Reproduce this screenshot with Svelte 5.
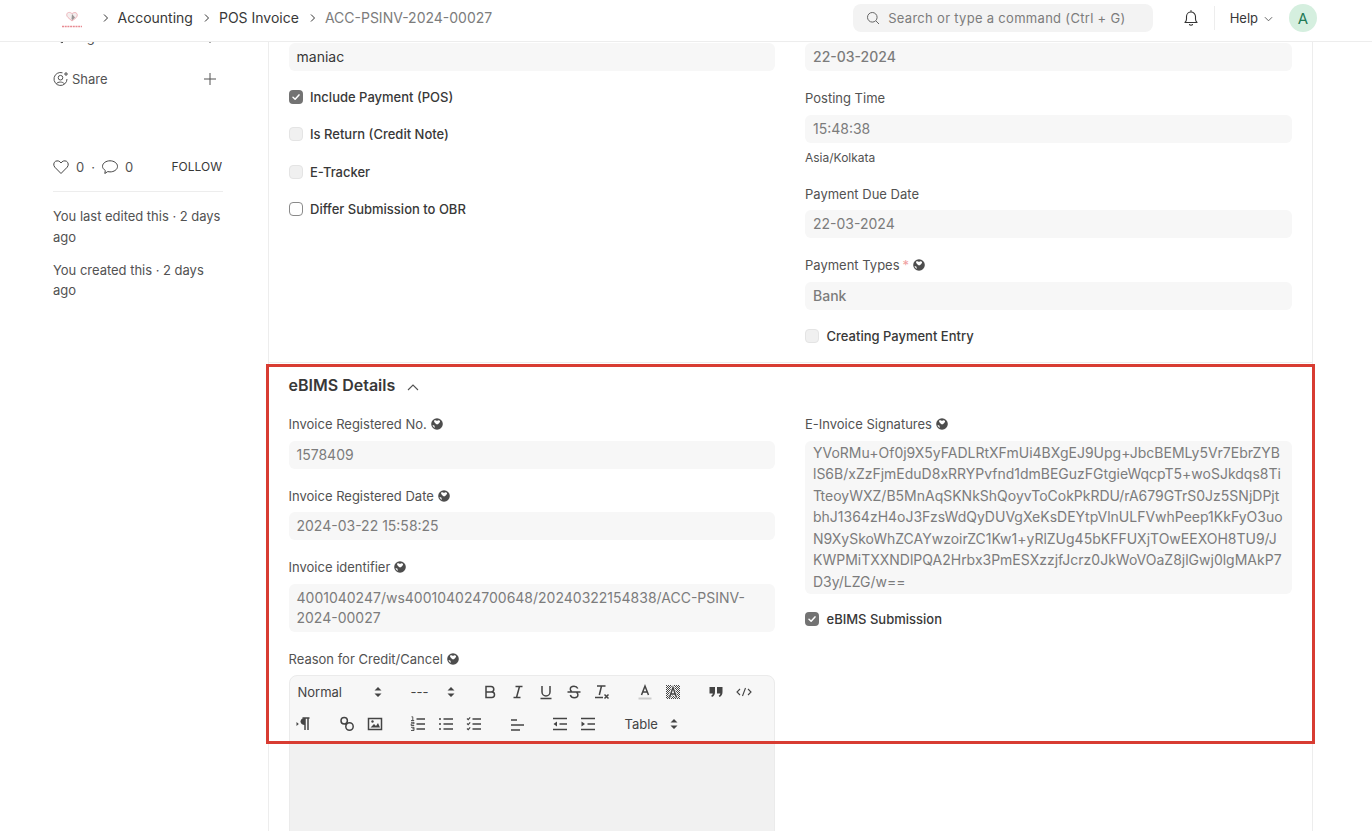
<script lang="ts">
  const signature = [
    "YVoRMu+Of0j9X5yFADLRtXFmUi4BXgEJ9Upg+JbcBEMLy5Vr7EbrZYB",
    "lS6B/xZzFjmEduD8xRRYPvfnd1dmBEGuzFGtgieWqcpT5+woSJkdqs8Ti",
    "TteoyWXZ/B5MnAqSKNkShQoyvToCokPkRDU/rA679GTrS0Jz5SNjDPjt",
    "bhJ1364zH4oJ3FzsWdQyDUVgXeKsDEYtpVlnULFVwhPeep1KkFyO3uo",
    "N9XySkoWhZCAYwzoirZC1Kw1+yRlZUg45bKFFUXjTOwEEXOH8TU9/J",
    "KWPMiTXXNDlPQA2Hrbx3PmESXzzjfJcrz0JkWoVOaZ8jlGwj0lgMAkP7",
    "D3y/LZG/w==",
  ];
</script>

{#snippet globe()}
  <svg class="globe" viewBox="0 0 12 12" width="12" height="12">
    <circle cx="6" cy="6" r="5.800" fill="#4d4d4d" />
    <path d="M3 2.800c1-.8 2.200-.6 3 .1.800-.7 2.100-.9 3.100 0 .2 1.500-1.500 2.700-3.100 3.700C4.400 5.600 2.800 4.300 3 2.800zM1.500 7l1.800.4.700 2.300-1.100-.4C2.200 8.700 1.700 7.900 1.500 7z" fill="#fff" />
  </svg>
{/snippet}

{#snippet stepper()}
  <svg class="stepper" viewBox="0 0 10 14" width="10" height="14">
    <path d="M1.500 5.500 5 2l3.500 3.500zM1.500 8.500 5 12l3.500-3.500z" fill="#444" />
  </svg>
{/snippet}

{#snippet check(state)}
  <span class="check {state}">
    {#if state === "on"}
      <svg viewBox="0 0 14 14" width="14" height="14"><path d="M4 7.300 6.100 9.200 10 4.900" fill="none" stroke="#fff" stroke-width="1.500" stroke-linecap="round" stroke-linejoin="round" /></svg>
    {/if}
  </span>
{/snippet}

{#snippet chevron()}
  <svg class="sep" viewBox="0 0 8 10" width="8" height="10"><path d="M2 1.500 5.500 5 2 8.500" fill="none" stroke="#333" stroke-width="1" /></svg>
{/snippet}

<div class="page">
  <header class="navbar">
    <div class="crumbs">
      <svg class="logo" viewBox="0 0 24 20" width="24" height="20">
        <path d="M12 13 8 9.500C6 7.500 6.500 5 8.500 4.500c1.500-.3 2.700.3 3.500 1.300 1-1 2.500-1.600 4-1 1.600.8 1.700 3 .3 4.700z" fill="#f3eeee" stroke="#eeb4ba" stroke-width="1" />
        <path d="M12 6l3 3.500-2.500 2.500-1-.8z" fill="#9a9696" />
        <path d="M2 18.500h20" stroke="#e88a92" stroke-width="1.400" stroke-dasharray="2 .7" />
      </svg>
      {@render chevron()}
      <span class="crumb">Accounting</span>
      {@render chevron()}
      <span class="crumb">POS Invoice</span>
      {@render chevron()}
      <span class="crumb current">ACC-PSINV-2024-00027</span>
    </div>
    <div class="nav-right">
      <div class="search">
        <svg viewBox="0 0 14 14" width="14" height="14"><circle cx="6.300" cy="6.300" r="4.800" fill="none" stroke="#666" stroke-width="1" /><path d="m10 10 3 3" stroke="#666" stroke-width="1" /></svg>
        <span>Search or type a command (Ctrl + G)</span>
      </div>
      <svg class="bell" viewBox="0 0 16 18" width="16" height="18"><path d="M2 13.500c1-1 1.500-2 1.500-3.500V7.500a4.500 4.500 0 0 1 9 0V10c0 1.500.5 2.500 1.500 3.500zM6.500 15.500c.4 1 2.600 1 3 0M8 3V1.500" fill="none" stroke="#333" stroke-width="1.100" stroke-linejoin="round" stroke-linecap="round" /></svg>
      <span class="divider"></span>
      <span class="help">Help</span>
      <svg class="help-caret" viewBox="0 0 10 6" width="10" height="6"><path d="m1 1 4 4 4-4" fill="none" stroke="#555" stroke-width="1" /></svg>
      <span class="avatar">A</span>
    </div>
  </header>

  <div class="body">
    <aside class="sidebar">
      <div class="side-row cut">
        <svg viewBox="0 0 16 16" width="16" height="16"><path d="M2 2h6l6.500 6.500-5.500 5.500L2 8z" fill="none" stroke="#525252" stroke-width="1" /></svg>
        <span>Tags</span>
        <svg class="plus" viewBox="0 0 14 14" width="14" height="14"><path d="M7 1v12M1 7h12" stroke="#525252" stroke-width="1" /></svg>
      </div>
      <div class="side-row share">
        <svg viewBox="0 0 16 16" width="16" height="16"><path d="M9.500 1.800A6.500 6.500 0 1 0 14 8" fill="none" stroke="#525252" stroke-width="1" /><circle cx="7.500" cy="6.700" r="2.300" fill="none" stroke="#525252" stroke-width="1" /><path d="M3.400 12.800c1.200-2.300 6.500-2.300 8 0" fill="none" stroke="#525252" stroke-width="1" /><path d="M11 3h4M13 1v4" stroke="#525252" stroke-width="1" /></svg>
        <span>Share</span>
        <svg class="plus" viewBox="0 0 14 14" width="14" height="14"><path d="M7 1v12M1 7h12" stroke="#525252" stroke-width="1" /></svg>
      </div>
      <div class="likes">
        <svg viewBox="0 0 16 14" width="16" height="14"><path d="M8 13.500 1.800 7.200C.1 5.200.6 2.400 2.500 1.300 4.500.3 6.800 1 8 3 9.200 1 11.500.3 13.500 1.300 15.400 2.400 15.900 5.200 14.200 7.200z" fill="none" stroke="#444" stroke-width="1" stroke-linejoin="round" /></svg>
        <span class="count">0</span>
        <span class="dot">·</span>
        <svg viewBox="0 0 16 14" width="16" height="14"><path d="M8 .8c3.900 0 7.500 2.300 7.500 5.600s-3.600 5.500-7.500 5.500c-.8 0-1.600-.1-2.300-.3L2.800 13.500l.5-3C1.700 9.400.5 8 .5 6.400.5 3.100 4.100.8 8 .8z" fill="none" stroke="#444" stroke-width="1" stroke-linejoin="round" /></svg>
        <span class="count">0</span>
        <span class="follow">FOLLOW</span>
      </div>
      <p class="meta first">You last edited this · 2 days ago</p>
      <p class="meta">You created this · 2 days ago</p>
    </aside>

    <main class="card">
      <section class="columns top">
        <div>
          <div class="input dark">maniac</div>
          <div class="check-row first">{@render check("on")}<span>Include Payment (POS)</span></div>
          <div class="check-row">{@render check("off")}<span>Is Return (Credit Note)</span></div>
          <div class="check-row">{@render check("off")}<span>E-Tracker</span></div>
          <div class="check-row">{@render check("empty")}<span>Differ Submission to OBR</span></div>
        </div>
        <div>
          <div class="input strong">22-03-2024</div>
          <div class="label after">Posting Time</div>
          <div class="input">15:48:38</div>
          <div class="hint">Asia/Kolkata</div>
          <div class="label after tz">Payment Due Date</div>
          <div class="input">22-03-2024</div>
          <div class="label after">Payment Types <span class="req">*</span> {@render globe()}</div>
          <div class="input strong">Bank</div>
          <div class="check-row last">{@render check("off")}<span>Creating Payment Entry</span></div>
        </div>
      </section>

      <section class="ebims">
        <h2>eBIMS Details
          <svg viewBox="0 0 12 8" width="12" height="8"><path d="m1 7 5-5 5 5" fill="none" stroke="#525252" stroke-width="1.100" /></svg>
        </h2>
        <div class="columns">
          <div>
            <div class="label">Invoice Registered No. {@render globe()}</div>
            <div class="input">1578409</div>
            <div class="label after">Invoice Registered Date {@render globe()}</div>
            <div class="input">2024-03-22 15:58:25</div>
            <div class="label after">Invoice identifier {@render globe()}</div>
            <div class="input">4001040247/ws400104024700648/20240322154838/ACC-PSINV-2024-00027</div>
            <div class="label after">Reason for Credit/Cancel {@render globe()}</div>
            <div class="editor">
              <div class="toolbar">
                <div class="tb-row">
                  <span class="picker header">Normal{@render stepper()}</span>
                  <span class="picker size">---{@render stepper()}</span>
                  <span class="group">
                    <span class="btn"><svg viewBox="0 0 18 18"><path d="M5 3.500h5a2.800 2.800 0 0 1 0 5.600H5zM5 9.100h5.800a2.700 2.700 0 0 1 0 5.400H5z" class="ln" /></svg></span>
                    <span class="btn"><svg viewBox="0 0 18 18"><path d="M6.500 3.500h7M4.500 14.500h7M10.500 3.500l-3 11" class="ln" /></svg></span>
                    <span class="btn"><svg viewBox="0 0 18 18"><path d="M5 3v6a4 4 0 0 0 8 0V3M3.500 15.500h11" class="ln" /></svg></span>
                    <span class="btn"><svg viewBox="0 0 18 18"><path d="M12.800 5.500C12 3.800 10.500 3.300 9 3.300c-2 0-3.700 1-3.700 2.900 0 1.100.6 1.900 1.600 2.300M5.300 12c.7 1.900 2.200 2.700 3.900 2.700 2 0 3.700-1 3.700-3 0-1.100-.5-1.900-1.400-2.400M2.500 9h13" class="ln" /></svg></span>
                    <span class="btn"><svg viewBox="0 0 18 18"><path d="M4 3h8.500M8.500 3l-2.200 9M2 14.500h8" class="ln" /><path d="M11.500 11.500l4 4M15.500 11.500l-4 4" class="ln" /></svg></span>
                  </span>
                  <span class="group">
                    <span class="btn"><svg viewBox="0 0 18 18"><path d="M5.500 12 9 3l3.500 9M6.800 9h4.400" class="ln" /><path d="M2.500 15.500h13" stroke="#ccc" stroke-width="2" /></svg></span>
                    <span class="btn"><svg viewBox="0 0 18 18">
                      <defs><pattern id="dots" width="2" height="2" patternUnits="userSpaceOnUse"><rect width="1" height="1" fill="#444" /><rect x="1" y="1" width="1" height="1" fill="#444" /></pattern></defs>
                      <rect x="2" y="2" width="14" height="14" fill="url(#dots)" /><path d="M5.500 14.500 9 4.500l3.500 10M6.800 11h4.400" class="ln halo" /><path d="M5.500 14.500 9 4.500l3.500 10M6.800 11h4.400" class="ln" /></svg></span>
                  </span>
                  <span class="group">
                    <span class="btn"><svg viewBox="0 0 18 18"><path d="M2.500 4h5.500v5c0 2.500-1 4-3 5l-.8-1.200c1-.6 1.500-1.300 1.600-2.300H2.500zM10 4h5.500v5c0 2.500-1 4-3 5l-.8-1.200c1-.6 1.500-1.300 1.600-2.300H10z" fill="#444" /></svg></span>
                    <span class="btn"><svg viewBox="0 0 18 18"><path d="M5 6 2 9l3 3M13 6l3 3-3 3M10.500 5l-3 8" class="ln thin" /></svg></span>
                  </span>
                </div>
                <div class="tb-row">
                  <span class="group">
                    <span class="btn"><svg viewBox="0 0 18 18"><path d="M1.500 7v4l2.300-2z" fill="#444" /><path d="M7.500 3h7M10 3v12M13 3v12" class="ln" /><path d="M10 3C7 3 5.500 4.700 5.500 6.500S7 10 10 10z" fill="#444" /></svg></span>
                  </span>
                  <span class="group">
                    <span class="btn"><svg viewBox="0 0 18 18"><circle cx="6.200" cy="5.800" r="3.200" class="ln" /><circle cx="11.500" cy="11.500" r="3.700" class="ln" /><path d="M7 8.500 9 10" class="ln" /></svg></span>
                    <span class="btn"><svg viewBox="0 0 18 18"><rect x="2.500" y="3.500" width="13" height="11" class="ln" /><path d="M4.500 12.500 8 9l2 2 2-3 2 4.500z" fill="#444" /><circle cx="6.500" cy="6.500" r="1.200" fill="#444" /></svg></span>
                  </span>
                  <span class="group">
                    <span class="btn"><svg viewBox="0 0 18 18"><path d="M7.500 4h8.500M7.500 9h8.500M7.500 14h8.500" class="ln" /><path d="M2.500 1.800h1.300V5.500M2 5.500h3.200M2 7.300h3v1.500H2.200v1.700h3M2 12.300h3v1.500H3.300M5 13.800v1.700H2" fill="none" stroke="#444" stroke-width=".9" /></svg></span>
                    <span class="btn"><svg viewBox="0 0 18 18"><path d="M6.500 4h9.500M6.500 9h9.500M6.500 14h9.500M2 4h2M2 9h2M2 14h2" class="ln" /></svg></span>
                    <span class="btn"><svg viewBox="0 0 18 18"><path d="M7.500 4h8.500M7.500 9h8.500M7.500 14h8.500" class="ln" /><path d="m2 3.500 1.200 1.200 2-2.400M2 8.500l1.200 1.200 2-2.400M2 13.500l1.200 1.200 2-2.400" class="ln thin" /></svg></span>
                  </span>
                  <span class="group">
                    <span class="btn"><svg viewBox="0 0 18 18"><path d="M3 5h6M3 10h13M3 15h9" class="ln" /></svg></span>
                  </span>
                  <span class="group">
                    <span class="btn"><svg viewBox="0 0 18 18"><path d="M2 3.500h14M8.500 9H16M2 14.500h14" class="ln" /><path d="M6 6.500v5L2.500 9z" fill="#444" /></svg></span>
                    <span class="btn"><svg viewBox="0 0 18 18"><path d="M2 3.500h14M8.500 9H16M2 14.500h14" class="ln" /><path d="M2.500 6.500v5L6 9z" fill="#444" /></svg></span>
                  </span>
                  <span class="picker table">Table{@render stepper()}</span>
                </div>
              </div>
              <div class="editor-body"></div>
            </div>
          </div>
          <div>
            <div class="label">E-Invoice Signatures {@render globe()}</div>
            <div class="input signature">
              {#each signature as line}<div>{line}</div>{/each}
            </div>
            <div class="check-row sub">{@render check("on")}<span>eBIMS Submission</span></div>
          </div>
        </div>
      </section>
    </main>
  </div>

  <div class="highlight"></div>
</div>

<style>
  :global(body) {
    background: #fff;
    overflow: hidden;
  }

  .page {
    position: relative;
    height: 831px;
    overflow: hidden;
    font-family: Inter, "Liberation Sans", sans-serif;
    color: #525252;
    font-size: 13px;
  }

  .navbar {
    position: relative;
    z-index: 2;
    display: flex;
    align-items: center;
    justify-content: space-between;
    height: 36px;
    padding: 0 55px 5px 60px;
    background: #fff;
    border-bottom: 1px solid #ededed;
  }

  .crumbs {
    display: flex;
    align-items: center;
    padding-bottom: 1px;
    font-size: 14px;
    color: #383838;
  }

  .logo {
    margin-right: 17.500px;
  }

  .sep {
    margin-right: 8px;
  }

  .crumb {
    margin-right: 10px;
  }

  .current {
    color: #7c7c7c;
  }

  .nav-right {
    display: flex;
    align-items: center;
  }

  .search {
    display: flex;
    align-items: center;
    gap: 8.500px;
    width: 300px;
    height: 28px;
    box-sizing: border-box;
    padding-left: 13px;
    background: #f3f3f3;
    border-radius: 8px;
    color: #7c7c7c;
    font-size: 13px;
    letter-spacing: 0.3px;
  }

  .bell {
    margin-left: 30px;
  }

  .divider {
    width: 1px;
    height: 24px;
    margin: 0 15px;
    background: #ededed;
  }

  .help {
    color: #383838;
  }

  .help-caret {
    margin: 2px 16px 0 6px;
    width: 9px;
  }

  .avatar {
    display: flex;
    align-items: center;
    justify-content: center;
    width: 28px;
    height: 28px;
    border-radius: 50%;
    background: #d5efdf;
    color: #1f7a55;
    font-size: 15px;
  }

  .body {
    display: flex;
    align-items: flex-start;
  }

  .sidebar {
    width: 170px;
    margin-left: 53px;
    flex: none;
  }

  .side-row {
    display: flex;
    align-items: center;
    gap: 3px;
    height: 16px;
  }

  .side-row.cut {
    margin-top: -13px;
  }

  .side-row.share {
    margin-top: 26px;
  }

  .plus {
    margin-left: auto;
    margin-right: 6px;
  }

  .likes {
    display: flex;
    align-items: center;
    margin-top: 72px;
    height: 16px;
  }

  .likes .count {
    margin: 0 7px;
  }

  .likes .dot {
    margin: 0 7px 0 0;
  }

  .follow {
    margin: -1px 1px 0 auto;
    font-size: 12px;
    color: #383838;
  }

  .meta {
    margin: 0 0 12px;
    line-height: 20.8px;
    font-size: 13px;
    letter-spacing: -0.02px;
  }

  .meta.first {
    margin-top: 16px;
    padding-top: 14px;
    border-top: 1px solid #ededed;
  }

  .card {
    box-sizing: border-box;
    width: 1045px;
    margin-left: 45px;
    border-left: 1px solid #ededed;
    border-right: 1px solid #ededed;
    height: 789px;
    flex: none;
  }

  .columns {
    display: grid;
    grid-template-columns: 486.500px 486.500px;
    gap: 30px;
  }

  .top {
    padding: 1px 20px 0 19.500px;
    height: 319px;
    border-bottom: 1px solid #ededed;
  }

  .label {
    display: flex;
    align-items: center;
    gap: 3px;
    height: 16px;
    margin-bottom: 8.500px;
    line-height: 16px;
  }

  .label.after {
    margin-top: 19px;
  }

  .label.tz {
    margin-top: 21.200px;
  }

  .req {
    color: #f0a0a0;
  }

  .globe {
    flex: none;
    margin-left: 1px;
  }

  .input {
    box-sizing: border-box;
    min-height: 28px;
    padding: 4px 8px;
    background: #f7f7f7;
    border-radius: 6px;
    font-size: 14px;
    line-height: 20px;
    color: #7c7c7c;
  }

  .input.strong {
    font-weight: 500;
  }

  .input.dark {
    color: #383838;
  }

  .signature {
    line-height: 21.500px;
    padding: 1px 8px 0;
    height: 153px;
    white-space: nowrap;
  }

  .hint {
    margin-top: 8px;
    font-size: 12px;
    line-height: 14px;
    color: #525252;
  }

  .check-row {
    display: flex;
    align-items: center;
    gap: 7.500px;
    height: 16px;
    margin-top: 21.500px;
    color: #383838;
    font-weight: 500;
    font-size: 13px;
  }

  .check-row.first {
    margin-top: 17.500px;
  }

  .check-row.last {
    margin-top: 18px;
  }

  .check-row.sub {
    margin-top: 17.500px;
  }

  .check {
    box-sizing: border-box;
    display: inline-block;
    width: 14px;
    height: 14px;
    border-radius: 4px;
    flex: none;
  }

  .check svg {
    display: block;
  }

  .check.on {
    background: #737373;
  }

  .check.off {
    background: #f0f0f0;
    border: 1px solid #e4e4e4;
  }

  .check.empty {
    background: #fff;
    border: 1px solid #8a8a8a;
  }

  .ebims {
    padding: 0 20px 0 19.500px;
  }

  .ebims h2 {
    display: flex;
    align-items: center;
    gap: 12px;
    margin: 0 0 19px;
    padding-top: 10px;
    height: 24px;
    font-size: 16px;
    line-height: 18px;
    font-weight: 600;
    color: #383838;
  }

  .ebims h2 svg {
    margin-top: 3px;
  }

  .editor {
    border: 1px solid #ebebeb;
    border-radius: 8px 8px 0 0;
    background: #f7f7f7;
    height: 200px;
  }

  .toolbar {
    height: 66px;
    border-bottom: 1px solid #ebebeb;
    color: #444;
  }

  .tb-row {
    display: flex;
    align-items: center;
    height: 32px;
  }

  .picker {
    display: flex;
    align-items: center;
    justify-content: space-between;
    box-sizing: border-box;
    height: 24px;
    padding: 0 5px 0 8px;
    margin-right: 15px;
    font-size: 13px;
    color: #444;
  }

  .picker.header {
    width: 98px;
  }

  .picker.size {
    width: 58px;
  }

  .picker.table {
    width: 66px;
    padding-right: 4px;
  }

  .group {
    display: flex;
    margin-right: 15px;
  }

  .group:last-child {
    margin-right: 0;
  }

  .btn {
    display: flex;
    align-items: center;
    justify-content: center;
    width: 28px;
    height: 24px;
  }

  .btn svg {
    width: 18px;
    height: 18px;
  }

  .ln {
    fill: none;
    stroke: #444;
    stroke-width: 1.500;
  }

  .thin {
    stroke-width: 1.100;
  }

  .halo {
    stroke: #f7f7f7;
    stroke-width: 3;
  }

  .editor-body {
    height: 130px;
    background: #f1f1f1;
  }

  .highlight {
    position: absolute;
    z-index: 3;
    left: 266px;
    top: 364px;
    width: 1049px;
    height: 380px;
    box-sizing: border-box;
    border: 3px solid #d83c32;
    pointer-events: none;
  }
</style>
